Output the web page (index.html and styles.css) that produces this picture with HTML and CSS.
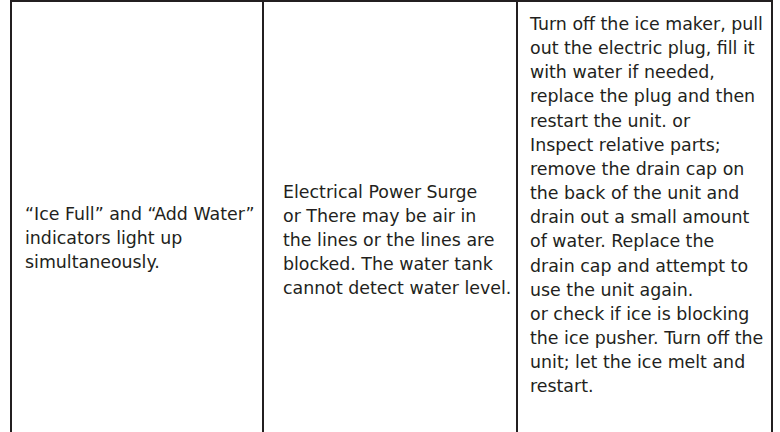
FILE: index.html
```html
<!DOCTYPE html>
<html lang="en">
<head>
<meta charset="utf-8">
<title>Troubleshooting</title>
<link rel="stylesheet" href="styles.css">
</head>
<body>
<div class="table">
  <div class="cell cell-problem">
    <p>“Ice Full” and “Add Water”<br>indicators light up<br>simultaneously.</p>
  </div>
  <div class="cell cell-cause">
    <p>Electrical Power Surge<br>or There may be air in<br>the lines or the lines are<br>blocked. The water tank<br>cannot detect water level.</p>
  </div>
  <div class="cell cell-solution">
    <p>Turn off the ice maker, pull<br>out the electric plug, fill it<br>with water if needed,<br>replace the plug and then<br>restart the unit. or<br>Inspect relative parts;<br>remove the drain cap on<br>the back of the unit and<br>drain out a small amount<br>of water. Replace the<br>drain cap and attempt to<br>use the unit again.<br>or check if ice is blocking<br>the ice pusher. Turn off the<br>unit; let the ice melt and<br>restart.</p>
  </div>
</div>
</body>
</html>
```
FILE: styles.css
```css
html, body {
  margin: 0;
  padding: 0;
  background: #ffffff;
  overflow: hidden;
}
body {
  width: 780px;
  height: 432px;
  font-family: "DejaVu Sans", "Open Sans", sans-serif;
  color: #231f20;
}
.table {
  margin-left: 10px;
  width: 763px;
  height: 476px;
  border-top: 2px solid #231f20;
  display: grid;
  grid-template-columns: 252px 254px 257px;
}
.cell {
  border-left: 2px solid #231f20;
  display: flex;
}
.cell p {
  margin: 0;
  font-size: 17.4px;
  line-height: 24px;
  white-space: nowrap;
}
.cell-problem {
  align-items: center;
  padding: 0 0 4px 13px;
}
.cell-cause {
  align-items: center;
  padding-left: 19px;
}
.cell-solution {
  align-items: flex-start;
  padding: 10px 0 0 12px;
  border-right: 2px solid #231f20;
}
.cell-solution p {
  line-height: 24.15px;
}
```
